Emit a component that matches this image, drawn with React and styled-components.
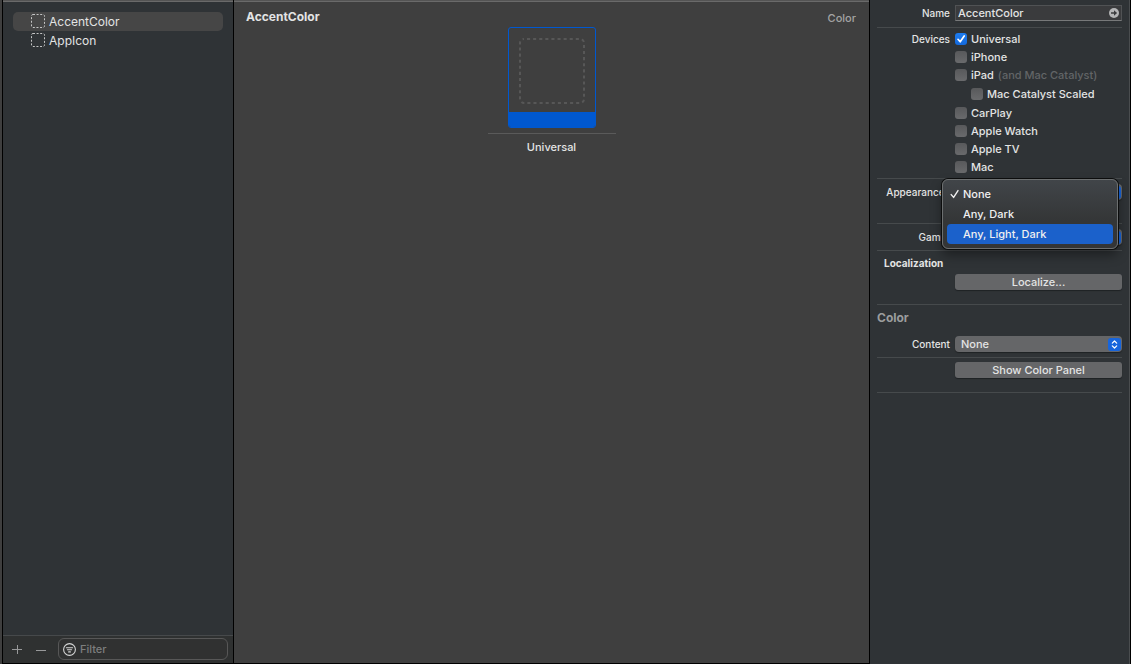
import React, { useId } from "react";
import styled, { createGlobalStyle, css } from "styled-components";

const Global = createGlobalStyle`
  *, *::before, *::after { box-sizing: border-box; }
  body {
    margin: 0;
    background: #2f3336;
    color: #e3e4e4;
    font: 500 11px/14px Inter, "Liberation Sans", sans-serif;
  }
  button, input, select { font: inherit; color: inherit; margin: 0; }
`;

const Window = styled.div`
  display: grid;
  grid-template-columns: 232px minmax(0, 1fr) 262px;
  min-height: 100vh;
  padding-left: 2px;
  background: #3f3f3f;
`;

const Sidebar = styled.nav`
  display: flex;
  flex-direction: column;
  background: #2f3336;
  border: solid #000;
  border-width: 0 1px 1px;
`;

const TopEdge = styled.div`
  height: 2px;
  background: #545454;
  border-bottom: 1px solid #6a6a6a;
`;

const AssetList = styled.ul`
  flex: 1;
  list-style: none;
  margin: 0;
  padding: 10px;
`;

const AssetRow = styled.button`
  display: flex;
  align-items: center;
  gap: 3px;
  width: 100%;
  height: 19px;
  padding: 0 18px;
  border: 0;
  border-radius: 5px;
  background: ${(p) => (p.$selected ? "#464646" : "transparent")};
  font-size: 12px;
  font-weight: 400;
  line-height: 16px;
`;

const SidebarFooter = styled.div`
  display: flex;
  align-items: flex-start;
  height: 28px;
  padding: 2px 5px 0 2px;
  border-top: 1px solid #46494b;
  background: #2f3131;
`;

const IconButton = styled.button`
  display: flex;
  align-items: center;
  justify-content: center;
  width: 24px;
  height: 22px;
  padding: 0;
  border: 0;
  background: none;
  color: #98999a;
`;

const FilterField = styled.label`
  display: flex;
  align-items: center;
  gap: 4px;
  flex: 1;
  min-width: 0;
  height: 22px;
  margin-left: 5px;
  padding: 0 4px;
  border: 1px solid #575757;
  border-radius: 6px;
  background: #303131;
`;

const FilterInput = styled.input`
  flex: 1;
  min-width: 0;
  padding: 0;
  border: 0;
  outline: 0;
  background: none;
  &::placeholder { color: #7d7e7e; opacity: 1; }
`;

const Canvas = styled.main`
  display: flex;
  flex-direction: column;
  background: #3f3f3f;
  border-bottom: 1px solid #000;
`;

const CanvasHeader = styled.header`
  display: flex;
  justify-content: space-between;
  height: 25px;
  padding: 7px 13px 0 12px;
`;

const AssetTitle = styled.h1`
  margin: 0;
  font-size: 12px;
  line-height: 16px;
  font-weight: 700;
`;

const AssetKind = styled.span`
  padding-top: 2px;
  color: #a4a4a4;
`;

const Slot = styled.figure`
  display: flex;
  flex-direction: column;
  align-items: center;
  align-self: center;
  width: 128px;
  margin: 0;
`;

const Well = styled.div`
  display: flex;
  flex-direction: column;
  width: 88px;
  border: 1px solid #0058d0;
  border-radius: 3px;
  overflow: hidden;
`;

const WellArt = styled.div`
  display: flex;
  justify-content: center;
  padding: 10px 0 8px;
`;

const WellBar = styled.div`
  height: 15px;
  background: #0058d0;
`;

const SlotLabel = styled.figcaption`
  width: 100%;
  margin-top: 5px;
  padding-top: 6px;
  border-top: 1px solid #5a5a5a;
  text-align: center;
`;

const Inspector = styled.aside`
  background: #2f3336;
  border-left: 1px solid #000;
  border-right: 1px solid #000;
  box-shadow: inset -1px 0 #4a4d4f;
  padding: 0 8px 0 7px;
`;

const Section = styled.section`
  padding: ${(p) => p.$pad || "0"};
  border-bottom: 1px solid #464a4c;
`;

const Field = styled.div`
  display: grid;
  grid-template-columns: 73px minmax(0, 1fr);
  column-gap: 5px;
  align-items: ${(p) => (p.$top ? "start" : "center")};
`;

const labelText = css`
  text-align: right;
  font-size: 10px;
  line-height: 16px;
  white-space: nowrap;
`;
const FieldLabel = styled.label`${labelText}`;
const FieldCaption = styled.span`${labelText}`;

const NameBox = styled.div`
  display: flex;
  align-items: center;
  height: 16px;
  padding: 0 2px;
  border: 1px solid #505254;
  border-bottom-color: #77797a;
  background: #3a3b3d;
`;

const NameInput = styled.input`
  flex: 1;
  min-width: 0;
  padding: 0;
  border: 0;
  outline: 0;
  background: none;
`;

const JumpButton = styled.button`
  display: flex;
  padding: 0;
  border: 0;
  background: none;
`;

const DeviceList = styled.div`
  display: flex;
  flex-direction: column;
  gap: 2px;
`;

const CheckRow = styled.label`
  display: flex;
  align-items: center;
  gap: 4px;
  height: 16px;
  margin: ${(p) => (p.$nested ? "1px 0 1px 16px" : "0")};
  white-space: nowrap;
`;

const CheckBox = styled.input`
  appearance: none;
  width: 12px;
  height: 12px;
  border-radius: 3px;
  background: linear-gradient(#58595b, #696a6c);
  &:checked {
    background: url("data:image/svg+xml,%3Csvg xmlns='http://www.w3.org/2000/svg' viewBox='0 0 12 12'%3E%3Cpath d='M3 6.3 5.2 8.8 9.2 3' fill='none' stroke='white' stroke-width='1.7' stroke-linecap='round' stroke-linejoin='round'/%3E%3C/svg%3E"), linear-gradient(#1d7cf0, #1469dc);
  }
`;

const Hint = styled.span`
  color: #626567;
`;

const PushButton = styled.button`
  width: 100%;
  height: 16px;
  padding: 0;
  border: 0;
  border-radius: 3px;
  background: #656668;
  box-shadow: 0 1px 1px #1f2224;
  line-height: 14px;
`;

const SelectFrame = styled.div`
  display: grid;
  align-items: center;
  height: 16px;
  border-radius: 4px;
  background: #656668;
  box-shadow: 0 1px 1px #1f2224;
  & > * { grid-area: 1 / 1; }
`;

const Select = styled.select`
  appearance: none;
  width: 100%;
  height: 16px;
  padding: 0 20px 0 6px;
  border: 0;
  outline: 0;
  background: none;
`;

const SelectKnob = styled.span`
  display: flex;
  justify-self: end;
  align-items: center;
  justify-content: center;
  width: 13px;
  height: 13px;
  margin-right: 1px;
  border-radius: 3px;
  background: #1765dc;
  pointer-events: none;
`;

const SectionTitle = styled.h2`
  margin: 0 0 3px;
  padding-left: 7px;
  font-size: 10px;
  line-height: 16px;
  font-weight: 700;
`;

const GroupTitle = styled.h2`
  margin: 0 0 10px;
  color: #9b9d9e;
  font-size: 12px;
  line-height: 16px;
  font-weight: 700;
`;

const MenuAnchor = styled.div`
  position: relative;
`;

const Menu = styled.ul`
  position: absolute;
  z-index: 1;
  top: -5px;
  right: 4px;
  width: 176px;
  margin: 0;
  padding: 4px;
  list-style: none;
  border: 1px solid #6c6f70;
  border-radius: 6px;
  background: linear-gradient(#414549, #343637 60%, #343536);
  box-shadow: 0 0 0 1px #0c0d0d, 0 6px 12px rgba(0, 0, 0, 0.4);
`;

const MenuItem = styled.button`
  display: flex;
  align-items: center;
  width: 100%;
  height: 20px;
  padding: 0 3px;
  border: 0;
  border-radius: 4px;
  background: ${(p) => (p.$active ? "#1b61cb" : "transparent")};
  color: #f0f0f0;
`;

const MenuMark = styled.span`
  display: flex;
  width: 13px;
`;

function DashedSquare() {
  return (
    <svg width="15" height="15" viewBox="0 0 15 15" aria-hidden="true">
      <rect x="0.5" y="0.5" width="13" height="13" rx="1.5" fill="none" stroke="#c4c5c5" strokeDasharray="2 1.6" />
    </svg>
  );
}

function EmptyColorWell() {
  return (
    <svg width="66" height="66" viewBox="0 0 66 66" aria-hidden="true">
      <rect x="1" y="1" width="64" height="64" rx="4" fill="none" stroke="#575757" strokeWidth="2" strokeDasharray="3.1 3" strokeDashoffset="-3" />
    </svg>
  );
}

function FilterIcon() {
  return (
    <svg width="13" height="13" viewBox="0 0 13 13" fill="none" stroke="#d5d6d6" strokeLinecap="round" aria-hidden="true">
      <circle cx="6.5" cy="6.5" r="5.9" strokeWidth="1.1" />
      <path d="M3.4 4.7h6.2M4.4 6.8h4.2M5.6 8.9h1.8" strokeWidth="1.1" />
    </svg>
  );
}

function JumpIcon() {
  return (
    <svg width="10" height="10" viewBox="0 0 10 10" aria-hidden="true">
      <circle cx="5" cy="5" r="5" fill="#b4b5b6" />
      <path d="M2 4.2h3V2.2L8.1 5 5 7.8v-2H2z" fill="#3a3b3d" />
    </svg>
  );
}

function Chevrons() {
  return (
    <svg width="7" height="9" viewBox="0 0 7 9" fill="none" stroke="#fff" strokeWidth="1.2" strokeLinecap="round" strokeLinejoin="round" aria-hidden="true">
      <path d="M1.3 3.2 3.5 1l2.2 2.2M1.3 5.8 3.5 8l2.2-2.2" />
    </svg>
  );
}

function CheckMark() {
  return (
    <svg width="10" height="10" viewBox="0 0 10 10" fill="none" stroke="#f0f0f0" strokeWidth="1.4" strokeLinecap="round" strokeLinejoin="round" aria-hidden="true">
      <path d="M1.2 5.6 3.6 8.4 8 1.6" />
    </svg>
  );
}

function Popup({ label, options }) {
  const id = useId();
  return (
    <Field>
      <FieldLabel htmlFor={id}>{label}</FieldLabel>
      <SelectFrame>
        <Select id={id}>
          {options.map((o) => <option key={o}>{o}</option>)}
        </Select>
        <SelectKnob><Chevrons /></SelectKnob>
      </SelectFrame>
    </Field>
  );
}

const assets = ["AccentColor", "AppIcon"];
const devices = [
  { name: "Universal", on: true },
  { name: "iPhone" },
  { name: "iPad", hint: "(and Mac Catalyst)" },
  { name: "Mac Catalyst Scaled", nested: true },
  { name: "CarPlay" },
  { name: "Apple Watch" },
  { name: "Apple TV" },
  { name: "Mac" },
];
const appearances = ["None", "Any, Dark", "Any, Light, Dark"];

export default function App() {
  return (
    <>
      <Global />
      <Window>
        <Sidebar>
          <TopEdge />
          <AssetList>
            {assets.map((name, i) => (
              <li key={name}>
                <AssetRow $selected={i === 0}><DashedSquare />{name}</AssetRow>
              </li>
            ))}
          </AssetList>
          <SidebarFooter>
            <IconButton aria-label="Add">
              <svg width="10" height="10" viewBox="0 0 10 10" stroke="currentColor"><path d="M0 5.5h10M5.5 1v9" /></svg>
            </IconButton>
            <IconButton aria-label="Remove">
              <svg width="10" height="10" viewBox="0 0 10 10" stroke="currentColor"><path d="M0 6.5h10" /></svg>
            </IconButton>
            <FilterField>
              <FilterIcon />
              <FilterInput placeholder="Filter" aria-label="Filter" />
            </FilterField>
          </SidebarFooter>
        </Sidebar>

        <Canvas>
          <TopEdge />
          <CanvasHeader>
            <AssetTitle>AccentColor</AssetTitle>
            <AssetKind>Color</AssetKind>
          </CanvasHeader>
          <Slot>
            <Well>
              <WellArt><EmptyColorWell /></WellArt>
              <WellBar />
            </Well>
            <SlotLabel>Universal</SlotLabel>
          </Slot>
        </Canvas>

        <Inspector>
          <Section $pad="5px 0 6px">
            <Field>
              <FieldLabel htmlFor="asset-name">Name</FieldLabel>
              <NameBox>
                <NameInput id="asset-name" defaultValue="AccentColor" />
                <JumpButton aria-label="Show in Finder"><JumpIcon /></JumpButton>
              </NameBox>
            </Field>
          </Section>
          <Section $pad="3px 0 3px">
            <Field $top>
              <FieldCaption>Devices</FieldCaption>
              <DeviceList>
                {devices.map((d) => (
                  <CheckRow key={d.name} $nested={d.nested}>
                    <CheckBox type="checkbox" defaultChecked={d.on} />
                    {d.name}
                    {d.hint && <Hint>{d.hint}</Hint>}
                  </CheckRow>
                ))}
              </DeviceList>
            </Field>
          </Section>
          <Section $pad="5px 0 23px">
            <MenuAnchor>
              <Popup label="Appearances" options={appearances} />
              <Menu>
                {appearances.map((name, i) => (
                  <li key={name}>
                    <MenuItem $active={i === 2}>
                      <MenuMark>{i === 0 && <CheckMark />}</MenuMark>
                      {name}
                    </MenuItem>
                  </li>
                ))}
              </Menu>
            </MenuAnchor>
          </Section>
          <Section $pad="5px 0">
            <Popup label="Gamut" options={["Any"]} />
          </Section>
          <Section $pad="4px 0 14px">
            <SectionTitle>Localization</SectionTitle>
            <Field>
              <span />
              <PushButton>Localize...</PushButton>
            </Field>
          </Section>
          <Section $pad="5px 0">
            <GroupTitle>Color</GroupTitle>
            <Popup label="Content" options={["None"]} />
          </Section>
          <Section $pad="4px 0 14px">
            <Field>
              <span />
              <PushButton>Show Color Panel</PushButton>
            </Field>
          </Section>
        </Inspector>
      </Window>
    </>
  );
}
